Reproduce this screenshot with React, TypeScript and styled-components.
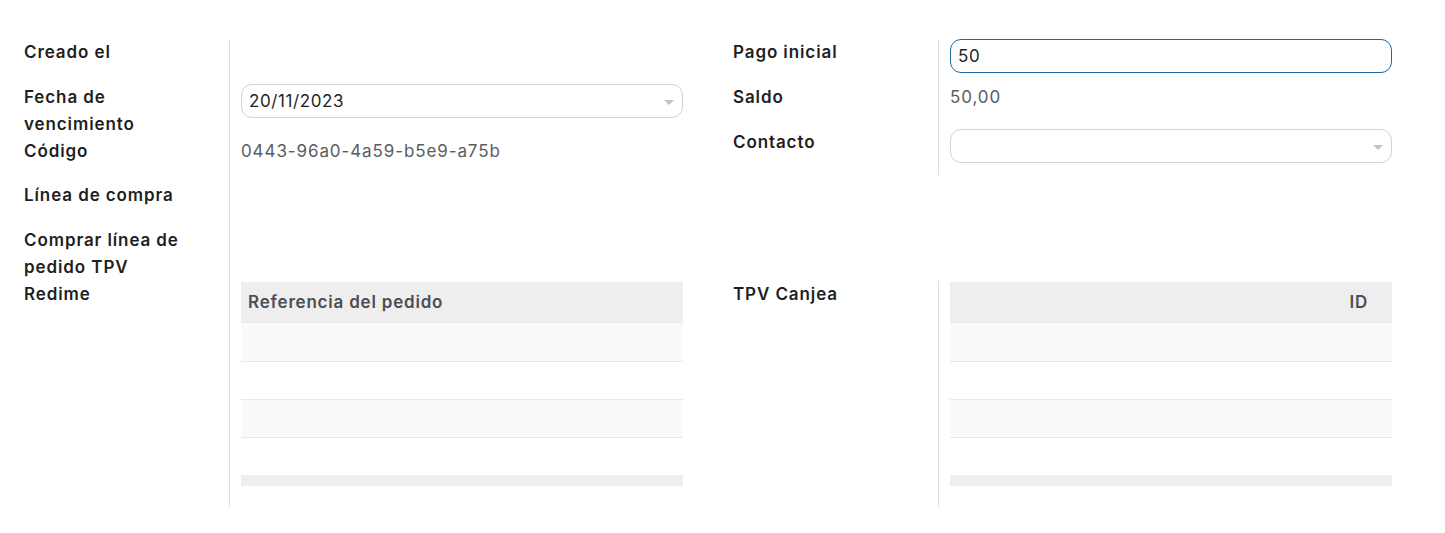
import React from "react";
import styled, { createGlobalStyle } from "styled-components";

const Global = createGlobalStyle`
  html, body { margin: 0; padding: 0; background: #ffffff; }
  body { font-family: "Inter", "Noto Sans", sans-serif; color: #1f1f1f; }
  * { box-sizing: border-box; }
`;

const Sheet = styled.div`
  padding: 39px 53px 0 24px;
  width: 1445px;
`;

const Section = styled.div`
  display: grid;
  grid-template-columns: 659px 659px;
  column-gap: 50px;
  align-items: start;
`;

const Group = styled.div`
  display: grid;
  grid-template-columns: 205px 1fr;
`;

const Label = styled.div<{ $h?: number }>`
  font-size: 17px;
  letter-spacing: 0.9px;
  font-weight: 600;
  line-height: 27px;
  color: #1f1f1f;
  min-height: ${(p) => p.$h ?? 45}px;
  padding-right: 12px;
`;

const Value = styled.div<{ $h?: number; $pt?: number; $pb?: number }>`
  border-left: 1px solid #dedede;
  padding-left: 11px;
  min-height: ${(p) => p.$h ?? 45}px;
  padding-top: ${(p) => p.$pt ?? 0}px;
  padding-bottom: ${(p) => p.$pb ?? 0}px;
  font-size: 16px;
  line-height: 27px;
`;

const Text = styled.div<{ $muted?: boolean }>`
  color: ${(p) => (p.$muted ? "#5a5d61" : "#1f1f1f")};
  font-size: 17px;
  letter-spacing: 0.9px;
  line-height: 27px;
`;

const Box = styled.div<{ $focus?: boolean }>`
  position: relative;
  height: 34px;
  border: 1px solid ${(p) => (p.$focus ? "#1d6c9f" : "#d4d4d4")};
  border-radius: 11px;
  padding: 0 28px 0 7px;
  display: flex;
  align-items: center;
  font-size: 17px;
  letter-spacing: 0.6px;
  color: #1f1f1f;
`;

const Arrow = styled.span`
  position: absolute;
  right: 8px;
  top: 15px;
  width: 0;
  height: 0;
  border-left: 5px solid transparent;
  border-right: 5px solid transparent;
  border-top: 5px solid #c4c4c4;
`;

const Table = styled.div`
  width: 100%;
`;

const Head = styled.div<{ $right?: boolean }>`
  height: 41px;
  background: #eeeeee;
  border-bottom: 1px solid #e7ebef;
  display: flex;
  align-items: center;
  justify-content: ${(p) => (p.$right ? "flex-end" : "flex-start")};
  padding: 0 24px 0 7px;
  font-size: 17px;
  letter-spacing: 0.8px;
  font-weight: 600;
  color: #4b4e52;
`;

const Row = styled.div<{ $odd?: boolean; $first?: boolean }>`
  height: 38px;
  background: ${(p) => (p.$odd ? "#fafafa" : "#ffffff")};
  border-top: ${(p) => (p.$first ? "none" : "1px solid #e8e8e8")};
`;

const Foot = styled.div`
  height: 11px;
  background: #eeeeee;
`;

const EmptyTable = ({ title, right }: { title: string; right?: boolean }) => (
  <Table>
    <Head $right={right}>{title}</Head>
    <Row $odd $first />
    <Row />
    <Row $odd />
    <Row />
    <Foot />
  </Table>
);

export default function App() {
  return (
    <>
      <Global />
      <Sheet>
        <Section>
          <Group>
            <Label>Creado el</Label>
            <Value />
            <Label $h={54}>Fecha de vencimiento</Label>
            <Value $h={54}>
              <Box>
                20/11/2023
                <Arrow />
              </Box>
            </Value>
            <Label $h={44}>Código</Label>
            <Value $h={44}>
              <Text $muted>0443-96a0-4a59-b5e9-a75b</Text>
            </Value>
            <Label>Línea de compra</Label>
            <Value />
            <Label $h={54}>Comprar línea de pedido TPV</Label>
            <Value $h={54} />
          </Group>
          <Group>
            <Label>Pago inicial</Label>
            <Value>
              <Box $focus>50</Box>
            </Value>
            <Label>Saldo</Label>
            <Value>
              <Text $muted>50,00</Text>
            </Value>
            <Label $h={46}>Contacto</Label>
            <Value $h={46}>
              <Box>
                <Arrow />
              </Box>
            </Value>
          </Group>
        </Section>
        <Section>
          <Group>
            <Label>Redime</Label>
            <Value $pt={1} $pb={21}>
              <EmptyTable title="Referencia del pedido" />
            </Value>
          </Group>
          <Group>
            <Label>TPV Canjea</Label>
            <Value $pt={1} $pb={21}>
              <EmptyTable title="ID" right />
            </Value>
          </Group>
        </Section>
      </Sheet>
    </>
  );
}
